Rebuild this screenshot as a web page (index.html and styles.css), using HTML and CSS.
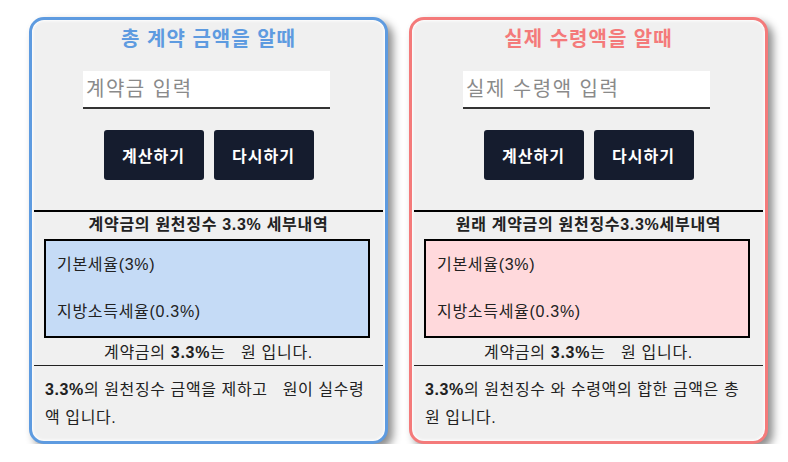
FILE: index.html
```html
<!DOCTYPE html>
<html lang="ko">
<head>
    <meta charset="UTF-8">
    <meta name="viewport" content="width=device-width, initial-scale=1.0">
    <title>3.3% 원천징수 계산기</title>
    <link rel="stylesheet" href="styles.css">
</head>
<body>
    <div class="calc-wrap">
        <!-- 총 계약금 기준 -->
        <div class="calc-card calc-card-blue">
            <div class="calc-top">
                <h2 class="calc-title">총 계약 금액을 알때</h2>
                <input class="calc-input" type="text" placeholder="계약금 입력">
                <div class="calc-buttons">
                    <button class="calc-button">계산하기</button>
                    <button class="calc-button">다시하기</button>
                </div>
            </div>
            <div class="calc-detail">
                <h3 class="calc-detail-title">계약금의 원천징수 <b>3.3%</b> 세부내역</h3>
                <div class="calc-box">
                    <p>기본세율(3%)</p>
                    <p>지방소득세율(0.3%)</p>
                </div>
                <p class="calc-sum">계약금의 <b>3.3%</b>는 &nbsp; 원 입니다.</p>
            </div>
            <p class="calc-result"><b>3.3%</b>의 원천징수 금액을 제하고 &nbsp; 원이 실수령액 입니다.</p>
        </div>

        <!-- 실수령액 기준 -->
        <div class="calc-card calc-card-red">
            <div class="calc-top">
                <h2 class="calc-title">실제 수령액을 알때</h2>
                <input class="calc-input" type="text" placeholder="실제 수령액 입력">
                <div class="calc-buttons">
                    <button class="calc-button">계산하기</button>
                    <button class="calc-button">다시하기</button>
                </div>
            </div>
            <div class="calc-detail">
                <h3 class="calc-detail-title">원래 계약금의 원천징수<b>3.3%</b>세부내역</h3>
                <div class="calc-box">
                    <p>기본세율(3%)</p>
                    <p>지방소득세율(0.3%)</p>
                </div>
                <p class="calc-sum">계약금의 <b>3.3%</b>는 &nbsp; 원 입니다.</p>
            </div>
            <p class="calc-result"><b>3.3%</b>의 원천징수 와 수령액의 합한 금액은 총 &nbsp; 원 입니다.</p>
        </div>
    </div>
</body>
</html>
```

FILE: styles.css
```css
body {
    margin: 0;
    background: #fff;
    font-family: "Liberation Sans", "Noto Sans CJK KR", sans-serif;
    letter-spacing: 0.7px;
    color: #222;
}

.calc-wrap {
    display: flex;
    gap: 21px;
    padding: 17px 0 0 29px;
}

/* card */
.calc-card {
    width: 359px;
    box-sizing: border-box;
    padding: 0 2px 9px;
    background: #f0f0f0;
    border: 3px solid;
    border-radius: 15px;
    box-shadow: 5px 5px 9px rgba(0, 0, 0, 0.45), inset 0 0 3px 1px #fff;
}
.calc-card-blue {
    border-color: #5e9be0;
}
.calc-card-red {
    border-color: #f47a7a;
}
.calc-card-blue .calc-title {
    color: #5e9be0;
}
.calc-card-red .calc-title {
    color: #f47a7a;
}
.calc-card-blue .calc-box {
    background: #c5dbf6;
}
.calc-card-red .calc-box {
    background: #ffd9dc;
}

/* input area */
.calc-top {
    display: flex;
    flex-direction: column;
    align-items: center;
    padding: 7px 0 30px;
    border-bottom: 2px solid #000;
}
.calc-title {
    margin: 0;
    font-size: 20px;
    line-height: 24px;
    letter-spacing: 1px;
    font-weight: bold;
}
.calc-input {
    width: 247px;
    height: 38px;
    box-sizing: border-box;
    margin: 20px 4px 0 0;
    padding: 0 3px;
    border: none;
    border-bottom: 2px solid #333;
    background: #fff;
    font-family: inherit;
    font-size: 20px;
    letter-spacing: 1.5px;
    color: #222;
    outline: none;
}
.calc-input::placeholder {
    color: #8a8a8a;
}
.calc-buttons {
    display: flex;
    gap: 10px;
    margin-top: 21px;
}
.calc-button {
    width: 100px;
    height: 50px;
    border: none;
    border-radius: 3px;
    background: #151c2e;
    color: #fff;
    font-family: inherit;
    font-size: 16px;
    letter-spacing: 1px;
    font-weight: bold;
    cursor: pointer;
}

/* detail */
.calc-detail {
    padding-top: 1px;
    border-bottom: 1px solid #222;
}
.calc-detail-title {
    margin: 0;
    text-align: center;
    font-size: 16px;
    line-height: 24px;
    font-weight: bold;
}
.calc-box {
    width: 326px;
    box-sizing: border-box;
    margin: 2px 0 0 10px;
    padding: 12px 11px;
    border: 2px solid #000;
}
.calc-box p {
    margin: 0;
    font-size: 16px;
    line-height: 24px;
}
.calc-box p + p {
    margin-top: 23px;
}
.calc-sum {
    margin: 3px 0 0;
    text-align: center;
    font-size: 16px;
    line-height: 24px;
}

.calc-result {
    margin: 10px 0 0;
    padding: 0 11px;
    font-size: 16px;
    line-height: 28px;
    letter-spacing: 0.6px;
}
```
